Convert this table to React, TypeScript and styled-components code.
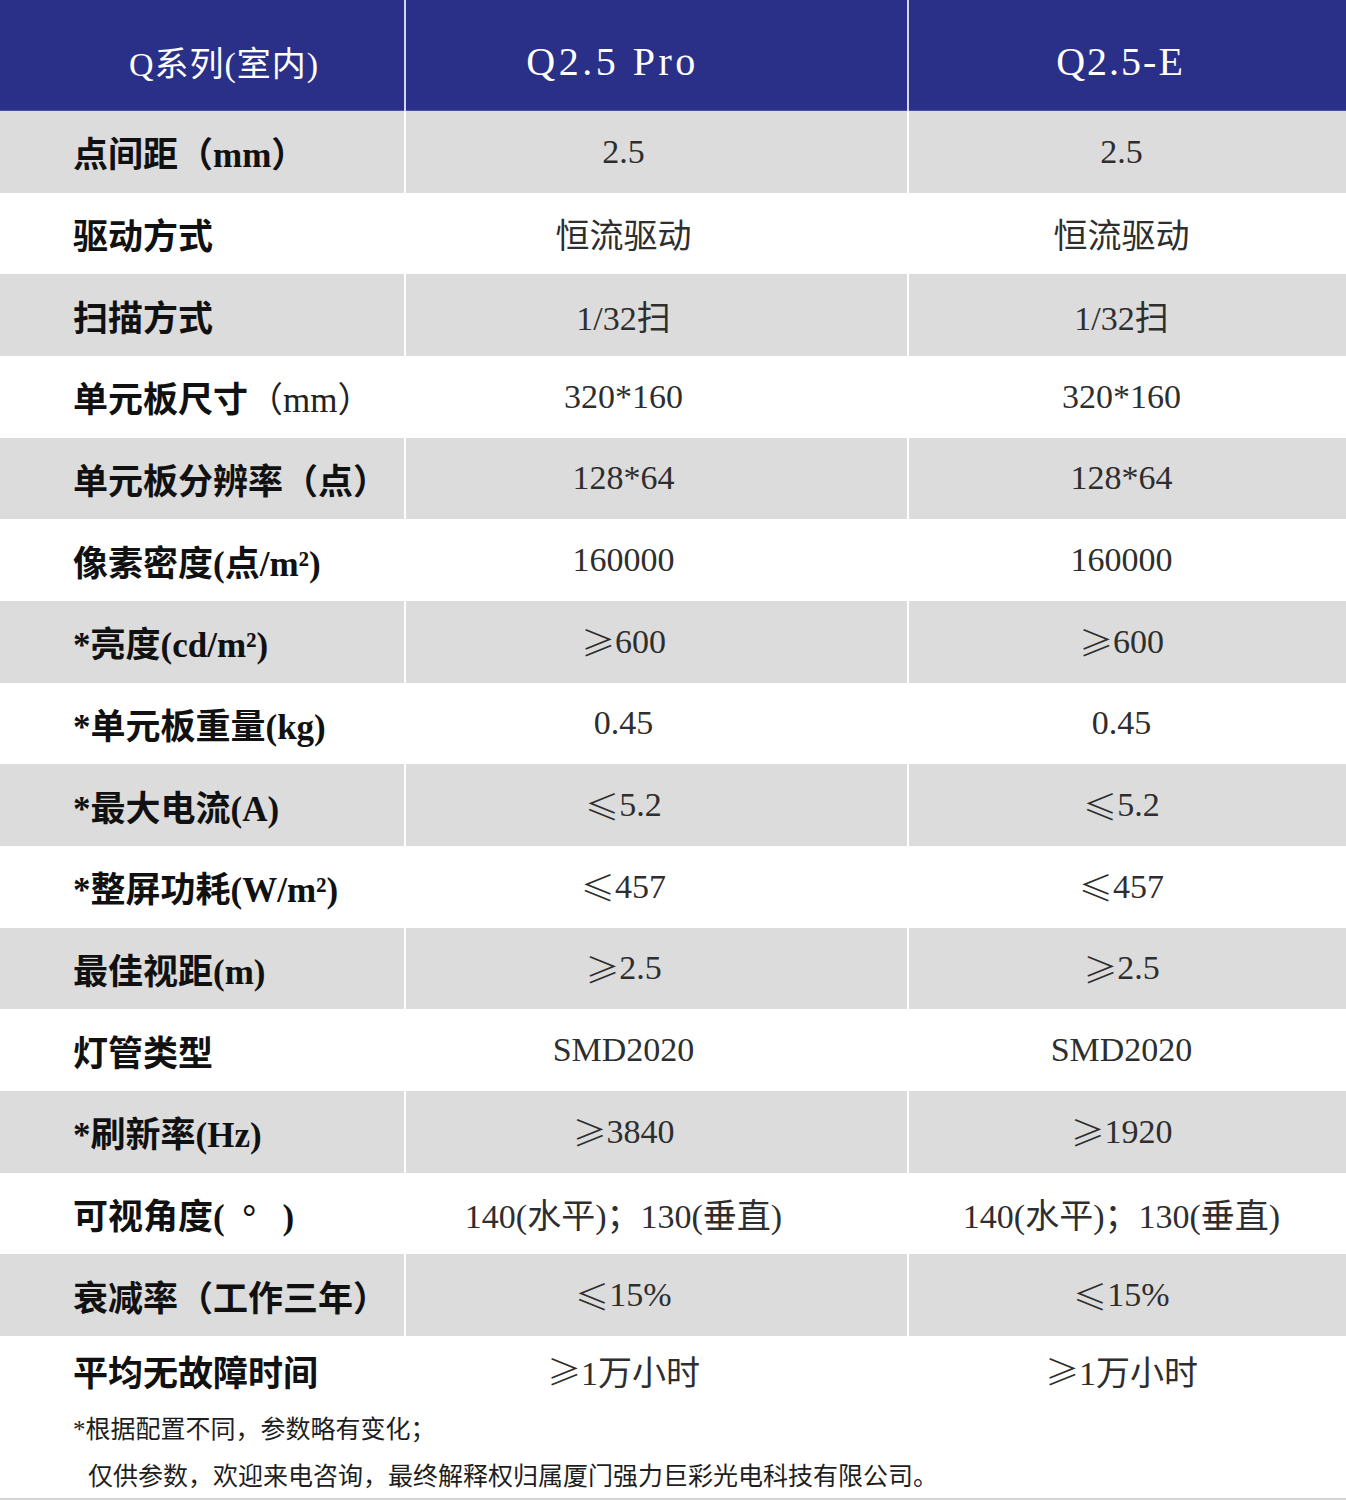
import React from "react";
import styled, { createGlobalStyle } from "styled-components";

const GlobalStyle = createGlobalStyle`
  html, body {
    margin: 0;
    padding: 0;
    background: #ffffff;
  }
  body {
    font-family: "Liberation Serif", "Noto Sans CJK SC", serif;
  }
`;

const Sheet = styled.div`
  width: 1346px;
  height: 1500px;
  box-sizing: border-box;
  border-bottom: 2px solid #d4d4d4;
  background: #ffffff;
  overflow: hidden;
`;

const Grid = styled.div`
  display: grid;
  grid-template-columns: 404px 501px 1fr;
  column-gap: 2px;
  background: #ffffff;
`;

const HeaderRow = styled(Grid)`
  height: 111px;
  background: #d5d7e8;
`;

const HeaderCell = styled.div<{ $shift: number; $size: number; $spacing: number }>`
  display: flex;
  align-items: center;
  justify-content: center;
  box-sizing: border-box;
  padding-top: 12px;
  padding-left: ${(p) => (p.$shift > 0 ? p.$shift * 2 : 0)}px;
  padding-right: ${(p) => (p.$shift < 0 ? -p.$shift * 2 : 0)}px;
  background: #2a3088;
  border-bottom: 1px solid #4b52a3;
  color: #ffffff;
  font-size: ${(p) => p.$size}px;
  letter-spacing: ${(p) => p.$spacing}px;
  white-space: nowrap;
`;

const SpecRow = styled(Grid)<{ $last?: boolean }>`
  height: ${(p) => (p.$last ? "70px" : "81.67px")};
`;

const Cell = styled.div<{ $shade: boolean }>`
  display: flex;
  align-items: center;
  box-sizing: border-box;
  background: ${(p) => (p.$shade ? "#dcdcdc" : "#ffffff")};
  white-space: nowrap;
`;

const Label = styled(Cell)`
  padding-left: 73px;
  font-size: 35px;
  font-weight: 700;
  color: #111111;
  white-space: pre;
`;

const Light = styled.span`
  font-weight: 400;
  color: #222222;
`;

const Value = styled(Cell)<{ $shift: number }>`
  justify-content: center;
  padding-right: ${(p) => -p.$shift * 2}px;
  font-size: 34px;
  font-weight: 400;
  color: #2e2e2e;
`;

// full-width comparison signs, as the source table sets them
const Sign = styled.span`
  font-family: "Noto Sans CJK SC", sans-serif;
  font-weight: 300;
`;

const Notes = styled.div`
  padding-left: 73px;
  font-size: 25px;
  line-height: 47px;
  color: #1e1e1e;
`;

const NoteLine = styled.div<{ $indent?: number }>`
  padding-left: ${(p) => p.$indent ?? 0}px;
  white-space: nowrap;
`;

type Spec = {
  label: React.ReactNode;
  pro: string;
  e: string;
};

const specs: Spec[] = [
  { label: "点间距（mm）", pro: "2.5", e: "2.5" },
  { label: "驱动方式", pro: "恒流驱动", e: "恒流驱动" },
  { label: "扫描方式", pro: "1/32扫", e: "1/32扫" },
  {
    label: (
      <>
        单元板尺寸<Light>（mm）</Light>
      </>
    ),
    pro: "320*160",
    e: "320*160",
  },
  { label: "单元板分辨率（点）", pro: "128*64", e: "128*64" },
  { label: "像素密度(点/m²)", pro: "160000", e: "160000" },
  { label: "*亮度(cd/m²)", pro: "≥600", e: "≥600" },
  { label: "*单元板重量(kg)", pro: "0.45", e: "0.45" },
  { label: "*最大电流(A)", pro: "≤5.2", e: "≤5.2" },
  { label: "*整屏功耗(W/m²)", pro: "≤457", e: "≤457" },
  { label: "最佳视距(m)", pro: "≥2.5", e: "≥2.5" },
  { label: "灯管类型", pro: "SMD2020", e: "SMD2020" },
  { label: "*刷新率(Hz)", pro: "≥3840", e: "≥1920" },
  { label: "可视角度(  °   )", pro: "140(水平)；130(垂直)", e: "140(水平)；130(垂直)" },
  { label: "衰减率（工作三年）", pro: "≤15%", e: "≤15%" },
  { label: "平均无故障时间", pro: "≥1万小时", e: "≥1万小时" },
];

function withSigns(text: string) {
  const sign = text[0];
  if (sign === "≥" || sign === "≤") {
    return (
      <>
        <Sign>{sign}</Sign>
        {text.slice(1)}
      </>
    );
  }
  return text;
}

export default function App() {
  return (
    <>
      <GlobalStyle />
      <Sheet>
        <HeaderRow>
          <HeaderCell $shift={22} $size={34} $spacing={1}>
            Q系列(室内)
          </HeaderCell>
          <HeaderCell $shift={-44} $size={40} $spacing={3.5}>
            Q2.5 Pro
          </HeaderCell>
          <HeaderCell $shift={-7} $size={40} $spacing={2}>
            Q2.5-E
          </HeaderCell>
        </HeaderRow>
        {specs.map((s, i) => {
          const shade = i % 2 === 0;
          return (
            <SpecRow key={i} $last={i === specs.length - 1}>
              <Label $shade={shade}>{s.label}</Label>
              <Value $shade={shade} $shift={-33}>
                {withSigns(s.pro)}
              </Value>
              <Value $shade={shade} $shift={-6}>
                {withSigns(s.e)}
              </Value>
            </SpecRow>
          );
        })}
        <Notes>
          <NoteLine>*根据配置不同，参数略有变化；</NoteLine>
          <NoteLine $indent={15}>
            仅供参数，欢迎来电咨询，最终解释权归属厦门强力巨彩光电科技有限公司。
          </NoteLine>
        </Notes>
      </Sheet>
    </>
  );
}
